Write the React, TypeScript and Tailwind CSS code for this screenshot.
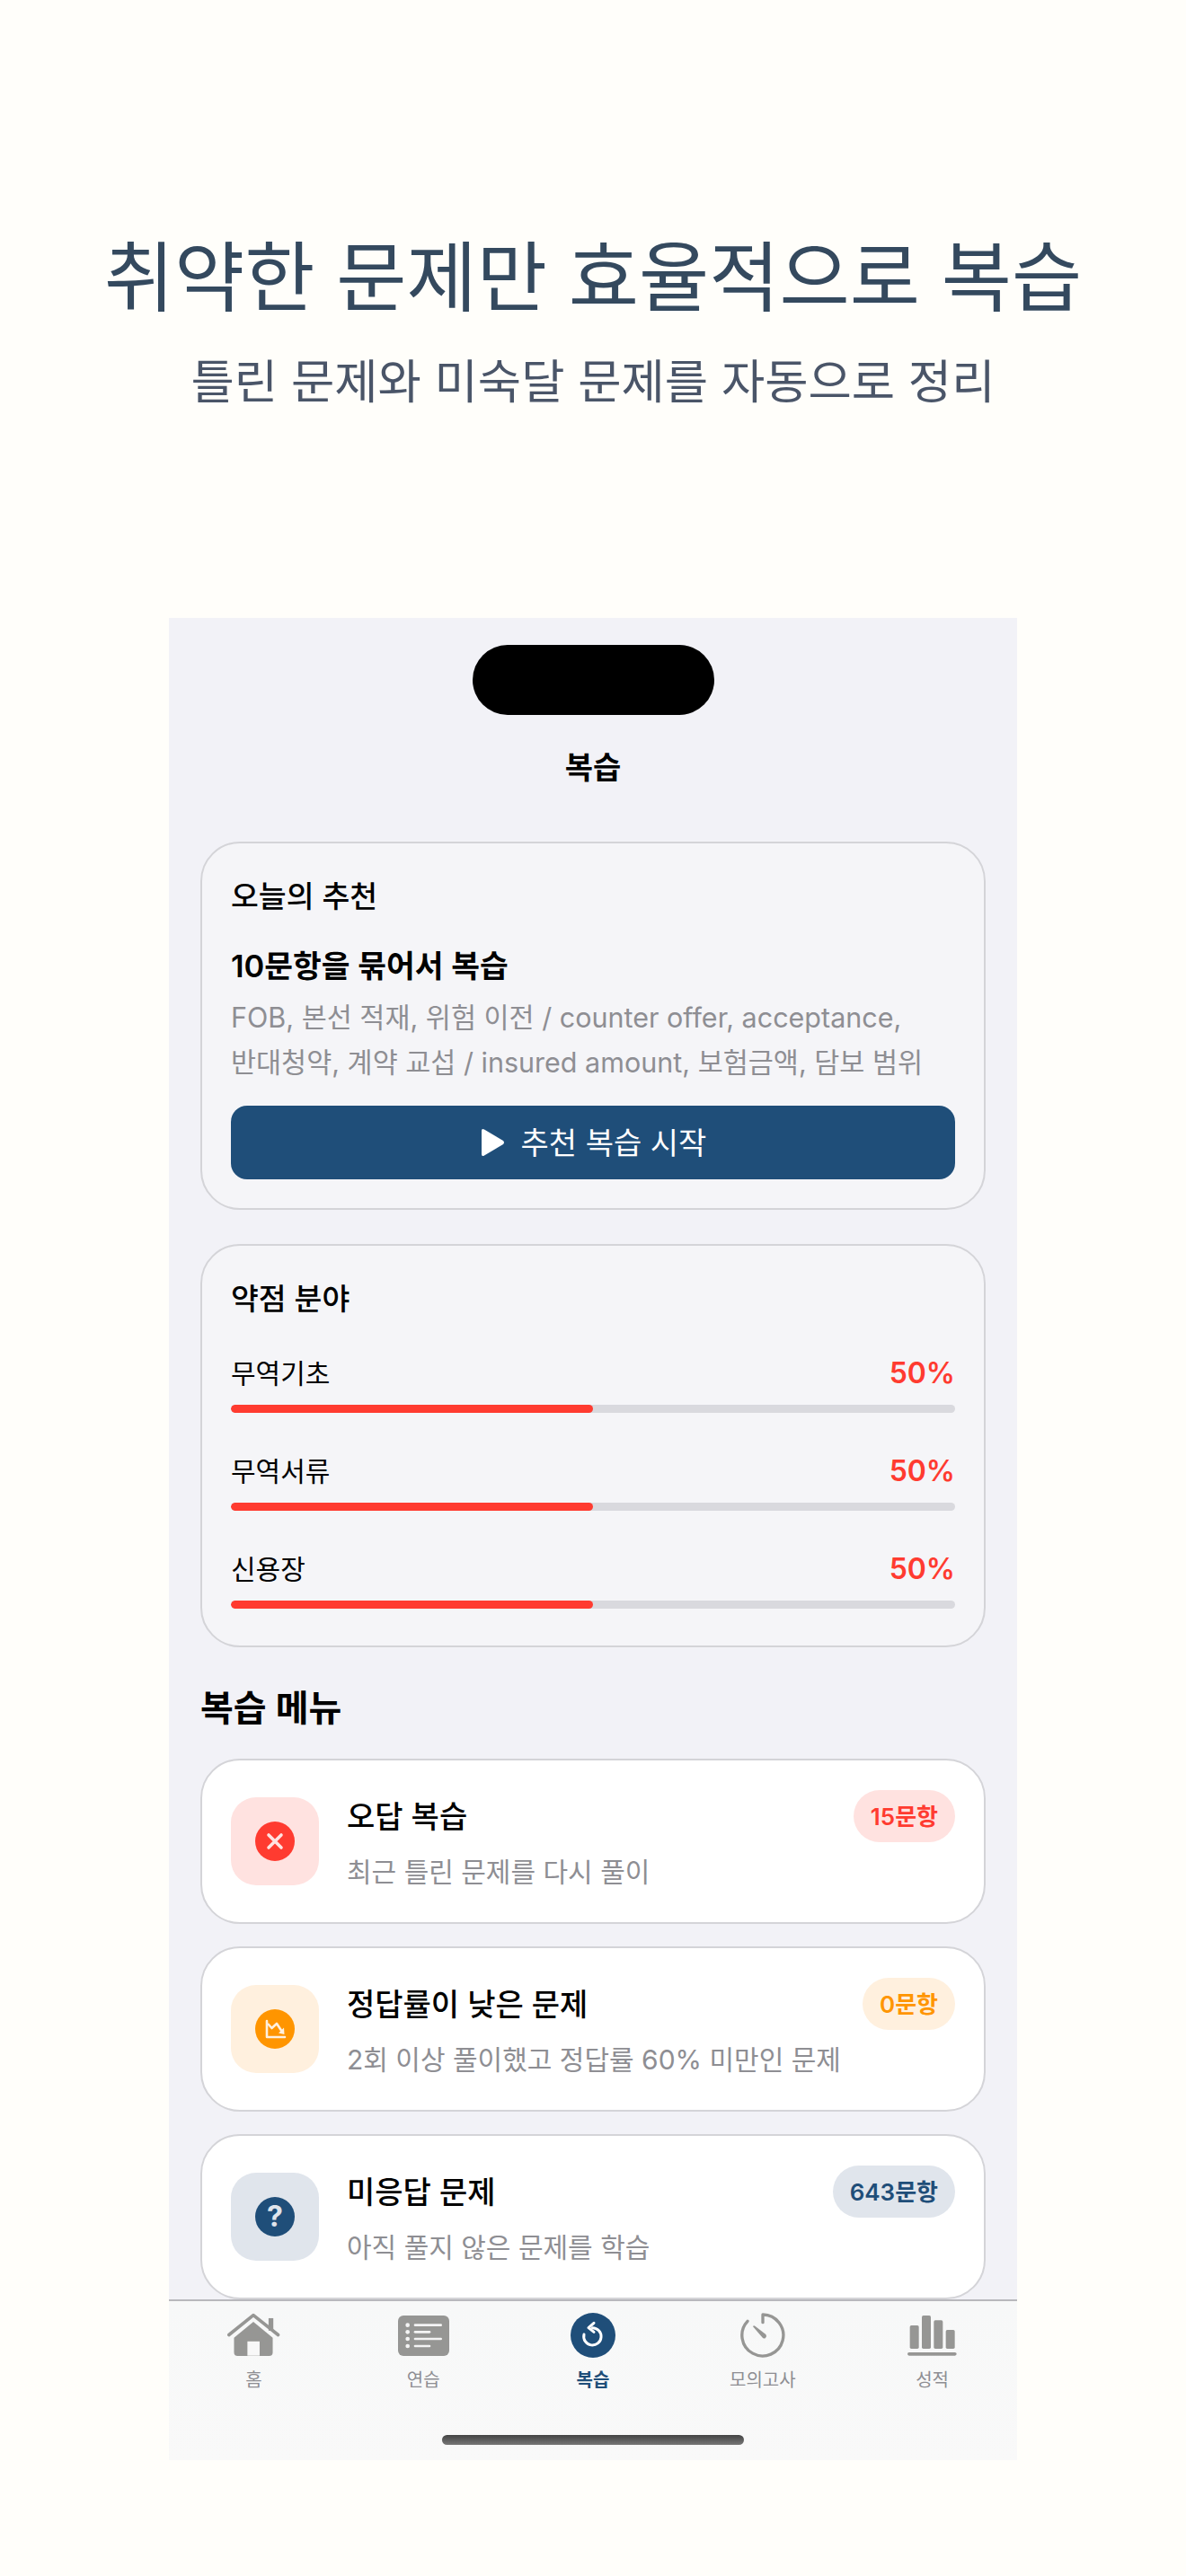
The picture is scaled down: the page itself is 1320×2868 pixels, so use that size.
import React from 'react'

const FONT = 'font-["Inter","Noto_Sans_CJK_KR",sans-serif]'

const weakAreas = [
  { label: '무역기초', pct: 50 },
  { label: '무역서류', pct: 50 },
  { label: '신용장', pct: 50 },
]

const XIcon = () => (
  <svg viewBox="0 0 44 44" className="w-[44px] h-[44px]">
    <circle cx="22" cy="22" r="22" fill="#ff3b30" />
    <path d="M15 15 L29 29 M29 15 L15 29" stroke="#ffe2e0" strokeWidth="3.6" strokeLinecap="round" />
  </svg>
)

const DownChartIcon = () => (
  <svg viewBox="0 0 44 44" className="w-[44px] h-[44px]">
    <circle cx="22" cy="22" r="22" fill="#ff9500" />
    <path d="M13 13 V31 H33" fill="none" stroke="#fff0de" strokeWidth="2.6" strokeLinecap="round" strokeLinejoin="round" />
    <path d="M14 16 L18.5 21 L24 16 L30 25" fill="none" stroke="#fff0de" strokeWidth="2.6" strokeLinejoin="round" />
    <path d="M26 26.5 L32.5 28 L32 20.5 Z" fill="#fff0de" />
  </svg>
)

const HelpIcon = () => (
  <div className="w-[44px] h-[44px] rounded-full bg-[#1f4e79] flex items-center justify-center text-[#e0e5ec] text-[32px] font-bold leading-none">
    ?
  </div>
)

const menus = [
  {
    title: '오답 복습',
    desc: '최근 틀린 문제를 다시 풀이',
    badge: '15문항',
    boxBg: 'bg-[#ffe2e0]',
    badgeText: 'text-[#ff3b30]',
    icon: <XIcon />,
  },
  {
    title: '정답률이 낮은 문제',
    desc: '2회 이상 풀이했고 정답률 60% 미만인 문제',
    badge: '0문항',
    boxBg: 'bg-[#fff0de]',
    badgeText: 'text-[#ff9500]',
    icon: <DownChartIcon />,
  },
  {
    title: '미응답 문제',
    desc: '아직 풀지 않은 문제를 학습',
    badge: '643문항',
    boxBg: 'bg-[#e0e5ec]',
    badgeText: 'text-[#1f4e79]',
    icon: <HelpIcon />,
  },
]

const HomeTab = () => (
  <svg viewBox="0 0 180 160" className="w-[60px] h-[53px]">
    <rect x="141" y="18" width="16" height="42" fill="#969694" />
    <path d="M25 84 L90 30 L155 84 V133 Q155 145 143 145 H37 Q25 145 25 133 Z" fill="#969694" />
    <path d="M8 74 L90 8 L173 74" fill="none" stroke="#969694" strokeWidth="11" strokeLinecap="round" strokeLinejoin="round" />
    <rect x="70" y="96" width="41" height="48" fill="#f8f8f8" />
  </svg>
)

const ListTab = () => (
  <svg viewBox="0 0 171 135" className="w-[57px] h-[45px] mt-[3px]">
    <rect width="171" height="135" rx="18" fill="#969694" />
    {[32, 55, 78, 102].map((y, i) => (
      <g key={y}>
        <circle cx="32" cy={y} r="7" fill="#f4f4f4" />
        <rect x="53" y={y - 4} width={i % 2 === 0 ? 94 : 56} height="8" rx="4" fill="#f4f4f4" />
      </g>
    ))}
  </svg>
)

const ReviewTab = () => (
  <svg viewBox="0 0 150 150" className="w-[50px] h-[50px]">
    <circle cx="75" cy="75" r="75" fill="#1f4e79" />
    <path d="M73 50 A29 29 0 1 1 45 72" fill="none" stroke="#fff" strokeWidth="9" strokeLinecap="round" />
    <path d="M78 34 L60 50 L78 64" fill="none" stroke="#fff" strokeWidth="9" strokeLinecap="round" strokeLinejoin="round" />
  </svg>
)

const TimerTab = () => (
  <svg viewBox="0 0 150 150" className="w-[50px] h-[50px]">
    <path
      d="M75 32 V6 A69 69 0 1 1 24 28"
      fill="none"
      stroke="#969694"
      strokeWidth="10"
      strokeLinecap="round"
      strokeLinejoin="round"
    />
    <path d="M42 46 Q44 41 49 44 L85 72 Q90 78 84 84 Q78 88 73 82 Z" fill="#969694" />
  </svg>
)

const StatsTab = () => (
  <svg viewBox="0 0 165 135" className="w-[55px] h-[45px] mt-[3px]">
    <rect x="8" y="33" width="30" height="78" rx="5" fill="#969694" />
    <rect x="48" y="0" width="30" height="111" rx="5" fill="#969694" />
    <rect x="88" y="16" width="30" height="95" rx="5" fill="#969694" />
    <rect x="128" y="48" width="30" height="63" rx="5" fill="#969694" />
    <rect x="0" y="123" width="164" height="11" rx="5.5" fill="#969694" />
  </svg>
)

const tabs = [
  { label: '홈', icon: <HomeTab /> },
  { label: '연습', icon: <ListTab /> },
  { label: '복습', icon: <ReviewTab />, active: true },
  { label: '모의고사', icon: <TimerTab /> },
  { label: '성적', icon: <StatsTab /> },
]

export default function App() {
  return (
    <div className={`${FONT} w-[1320px] h-[2868px] bg-[#fffefa] overflow-hidden`}>
      {/* Marketing header */}
      <div className="h-[688px] pt-[258px] text-center">
        <h1 className="text-[#34495e] text-[85px] leading-[104px] font-normal">취약한 문제만 효율적으로 복습</h1>
        <p className="mt-[31px] text-[#4a5568] text-[52.5px] leading-[64px]">틀린 문제와 미숙달 문제를 자동으로 정리</p>
      </div>

      {/* Phone */}
      <div className="w-[944px] h-[2051px] mx-auto bg-[#f2f2f7] flex flex-col overflow-hidden">
        <div className="flex-1 min-h-0 overflow-hidden">
          <div className="w-[269px] h-[78px] mt-[30px] mx-auto rounded-[39px] bg-black" />
          <div className="mt-[39px] text-center text-black text-[34px] leading-[40px] font-semibold">복습</div>

          <div className="mt-[62px] px-[35px]">
            {/* 오늘의 추천 */}
            <section className="border-2 border-[#d4d4d8] rounded-[44px] bg-[#f5f5f8] px-[32px] pt-[37px] pb-[32px]">
              <h2 className="text-black text-[33.5px] leading-[44px] font-medium">오늘의 추천</h2>
              <div className="mt-[34px] text-black text-[34.5px] leading-[44px] font-semibold">10문항을 묶어서 복습</div>
              <p className="mt-[10px] text-[#8e8e93] text-[30.5px] leading-[50px] whitespace-nowrap">
                FOB, 본선 적재, 위험 이전 / counter offer, acceptance,
                <br />
                반대청약, 계약 교섭 / insured amount, 보험금액, 담보 범위
              </p>
              <button className="mt-[23px] w-full h-[82px] rounded-[18px] bg-[#1f4e79] flex items-center justify-center gap-[18px] text-white text-[34px]">
                <svg viewBox="0 0 28 32" className="w-[28px] h-[32px]">
                  <path d="M2 3 Q2 0 5 1.5 L26 14 Q28 16 26 18 L5 30.5 Q2 32 2 29 Z" fill="#fff" />
                </svg>
                추천 복습 시작
              </button>
            </section>

            {/* 약점 분야 */}
            <section className="mt-[38px] border-2 border-[#d4d4d8] rounded-[44px] bg-[#f5f5f8] px-[32px] pt-[37px] pb-[41px]">
              <h2 className="text-black text-[33.5px] leading-[44px] font-medium">약점 분야</h2>
              <div className="mt-[39px] flex flex-col gap-[43px]">
                {weakAreas.map((area) => (
                  <div key={area.label}>
                    <div className="flex items-center justify-between h-[44px]">
                      <span className="text-black text-[30px]">{area.label}</span>
                      <span className="text-[#ff3b30] text-[32px] font-semibold">{area.pct}%</span>
                    </div>
                    <div className="mt-[13px] h-[9px] rounded-full bg-[#d9d9de] overflow-hidden">
                      <div className="h-full rounded-full bg-[#ff3b30]" style={{ width: `${area.pct}%` }} />
                    </div>
                  </div>
                ))}
              </div>
            </section>

            {/* 복습 메뉴 */}
            <h2 className="mt-[43px] text-black text-[40px] leading-[50px] font-semibold">복습 메뉴</h2>
            <div className="mt-[31px] flex flex-col gap-[25px]">
              {menus.map((menu) => (
                <div key={menu.title} className="h-[184px] border-2 border-[#d4d4d8] rounded-[44px] bg-white px-[32px] flex items-start">
                  <div className={`${menu.boxBg} self-center w-[98px] h-[98px] rounded-[28px] flex items-center justify-center flex-none`}>
                    {menu.icon}
                  </div>
                  <div className="ml-[31px] mt-[41px]">
                    <div className="text-black text-[34px] leading-[44px] font-medium">{menu.title}</div>
                    <div className="mt-[17px] text-[#8e8e93] text-[30px] leading-[44px]">{menu.desc}</div>
                  </div>
                  <span className={`${menu.badgeText} ${menu.boxBg} ml-auto mt-[33px] h-[58px] rounded-full px-[19px] flex items-center text-[26px] font-semibold`}>
                    {menu.badge}
                  </span>
                </div>
              ))}
            </div>
          </div>
        </div>

        {/* Tab bar */}
        <div className="h-[179px] flex-none border-t-2 border-[#b8b8bc] bg-gradient-to-b from-[#f7f8f8] to-[#f9f9f9] pt-[13px]">
          <div className="grid grid-cols-5">
            {tabs.map((tab) => (
              <div key={tab.label} className="flex flex-col items-center">
                <div className="h-[52px] flex items-start justify-center">{tab.icon}</div>
                <span className={`mt-[11px] text-[20px] leading-[24px] ${tab.active ? 'text-[#1f4e79] font-semibold' : 'text-[#8e8e93]'}`}>
                  {tab.label}
                </span>
              </div>
            ))}
          </div>
          <div className="mt-[49px] w-[336px] h-[11px] mx-auto rounded-full bg-gradient-to-b from-[#444444] to-[#777777]" />
        </div>
      </div>
    </div>
  )
}
